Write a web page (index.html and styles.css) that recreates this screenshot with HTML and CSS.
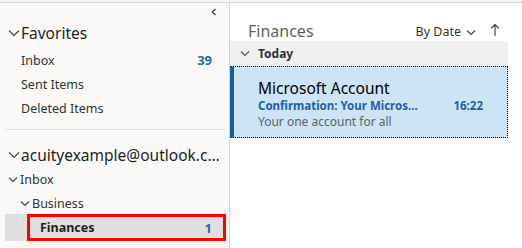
FILE: index.html
```html
<!DOCTYPE html>
<html lang="en">
<head>
    <meta charset="UTF-8">
    <meta name="viewport" content="width=device-width, initial-scale=1.0">
    <title>Finances - Mail</title>
    <link rel="stylesheet" href="styles.css">
</head>
<body>
    <div class="topbar"></div>

    <div class="app">
        <nav class="folders">
            <div class="collapse">
                <svg width="8" height="8" viewBox="0 0 8 8"><path d="M5.5 1 L2.5 4 L5.5 7" fill="none" stroke="#555" stroke-width="1.6"/></svg>
            </div>

            <div class="section-head">
                <svg class="chev" width="12" height="8" viewBox="0 0 12 8"><path d="M1 1.5 L6 6.5 L11 1.5" fill="none" stroke="#444" stroke-width="1.1"/></svg>
                <span>Favorites</span>
            </div>
            <div class="folder"><span>Inbox</span><span class="count">39</span></div>
            <div class="folder"><span>Sent Items</span></div>
            <div class="folder"><span>Deleted Items</span></div>

            <div class="divider"></div>

            <div class="section-head account">
                <svg class="chev" width="12" height="8" viewBox="0 0 12 8"><path d="M1 1.5 L6 6.5 L11 1.5" fill="none" stroke="#444" stroke-width="1.1"/></svg>
                <span class="ellipsis">acuityexample@outlook.com</span>
            </div>
            <div class="folder tree">
                <svg class="chev small" width="10" height="7" viewBox="0 0 10 7"><path d="M1 1.5 L5 5.5 L9 1.5" fill="none" stroke="#444" stroke-width="1.1"/></svg>
                <span>Inbox</span>
            </div>
            <div class="folder tree level2">
                <svg class="chev small" width="10" height="7" viewBox="0 0 10 7"><path d="M1 1.5 L5 5.5 L9 1.5" fill="none" stroke="#444" stroke-width="1.1"/></svg>
                <span>Business</span>
            </div>
            <div class="folder selected">
                <div class="highlight">
                    <span class="name">Finances</span>
                    <span class="count">1</span>
                </div>
            </div>
            <div class="folder"><span>Drafts</span></div>
        </nav>

        <main class="messages">
            <header class="list-head">
                <span class="title">Finances</span>
                <span class="sort">By Date
                    <svg width="10" height="7" viewBox="0 0 10 7"><path d="M1 1.5 L5 5.5 L9 1.5" fill="none" stroke="#444" stroke-width="1.1"/></svg>
                </span>
                <svg class="arrow" width="10" height="14" viewBox="0 0 10 14"><path d="M5 13 V1.5 M1.2 5.3 L5 1.5 L8.8 5.3" fill="none" stroke="#333" stroke-width="1.1"/></svg>
            </header>

            <div class="group">
                <svg width="10" height="7" viewBox="0 0 10 7"><path d="M1 1.5 L5 5.5 L9 1.5" fill="none" stroke="#555" stroke-width="1.1"/></svg>
                <span>Today</span>
            </div>

            <div class="mail">
                <div class="sender">Microsoft Account</div>
                <div class="subject-row">
                    <span class="subject">Confirmation: Your Micros...</span>
                    <span class="time">16:22</span>
                </div>
                <div class="preview">Your one account for all</div>
            </div>
        </main>
    </div>
</body>
</html>
```

FILE: styles.css
```css
html, body {
    margin: 0;
    height: 100%;
    overflow: hidden;
}
body {
    font-family: 'Segoe UI', 'Noto Sans', sans-serif;
    color: #323130;
    background: #ffffff;
}
.topbar {
    height: 2px;
    background: #f4f4f4;
    border-bottom: 1px solid #d8d8d8;
}
.app {
    display: grid;
    grid-template-columns: 230px 1fr;
    height: 245px;
}
.folders {
    background: #faf9f8;
    border-right: 1px solid #d2d0ce;
    overflow: hidden;
}
.collapse {
    height: 17px;
    display: flex;
    justify-content: flex-end;
    align-items: center;
    padding-right: 11px;
}
.section-head {
    height: 26px;
    display: flex;
    align-items: center;
    padding-left: 8px;
    font-size: 15.5px;
    color: #201f1e;
    white-space: nowrap;
}
.section-head .chev {
    margin-right: 1px;
}
.folders > .section-head:nth-child(2) {
    margin-bottom: 2px;
}
.account {
    height: 24px;
}
.ellipsis {
    overflow: hidden;
    text-overflow: ellipsis;
    max-width: 208px;
}
.folder {
    height: 24px;
    display: flex;
    align-items: center;
    padding-left: 21px;
    padding-right: 17px;
    font-size: 12.5px;
    color: #323130;
}
.folder .count {
    margin-left: auto;
    color: #2b67b7;
    font-weight: 700;
    font-size: 13px;
}
.folder.tree {
    padding-left: 8px;
}
.folder.tree .chev {
    margin-right: 2px;
}
.folder.level2 {
    padding-left: 20px;
}
.divider {
    height: 1px;
    background: #e1dfdd;
    margin: 9px 4px 13px 5px;
}
.folder.selected {
    height: 27px;
    margin-top: -1px;
    padding: 0 3px 0 5px;
}
.highlight {
    flex: 1;
    height: 100%;
    box-sizing: border-box;
    display: flex;
    align-items: center;
    background: #e1dfdd;
    border: 3px solid #ff0000;
    margin-left: 22px;
    padding: 0 11px 0 10px;
    box-shadow: -22px 0 0 #e1dfdd;
}
.highlight .name {
    font-weight: 700;
    color: #201f1e;
}

.messages {
    display: flex;
    flex-direction: column;
    padding-right: 14px;
}
.list-head {
    height: 38px;
    box-sizing: border-box;
    display: flex;
    align-items: flex-end;
    padding: 0 8px 0 18px;
}
.list-head .title {
    font-size: 16px;
    color: #616161;
    line-height: 20px;
}
.sort {
    margin-left: auto;
    font-size: 12.5px;
    color: #323130;
    display: flex;
    align-items: center;
    gap: 5px;
    line-height: 18px;
}
.arrow {
    margin-left: 14px;
    margin-bottom: 4px;
}
.group {
    height: 25px;
    background: #f0f0f0;
    display: flex;
    align-items: center;
    padding-left: 10px;
    gap: 8px;
    font-size: 12px;
    font-weight: 700;
    color: #323130;
}
.mail {
    height: 72px;
    box-sizing: border-box;
    background: #cce4f6;
    border: 1px dotted #000;
    border-left: 4px solid #0f5ea8;
    padding: 11px 24px 0 24px;
}
.sender {
    font-size: 15.5px;
    color: #000;
    line-height: 20px;
}
.subject-row {
    display: flex;
    justify-content: space-between;
    font-size: 11.5px;
    font-weight: 700;
    color: #1f5ea8;
    line-height: 16px;
}
.preview {
    font-size: 12px;
    color: #616161;
    line-height: 16px;
}
```
